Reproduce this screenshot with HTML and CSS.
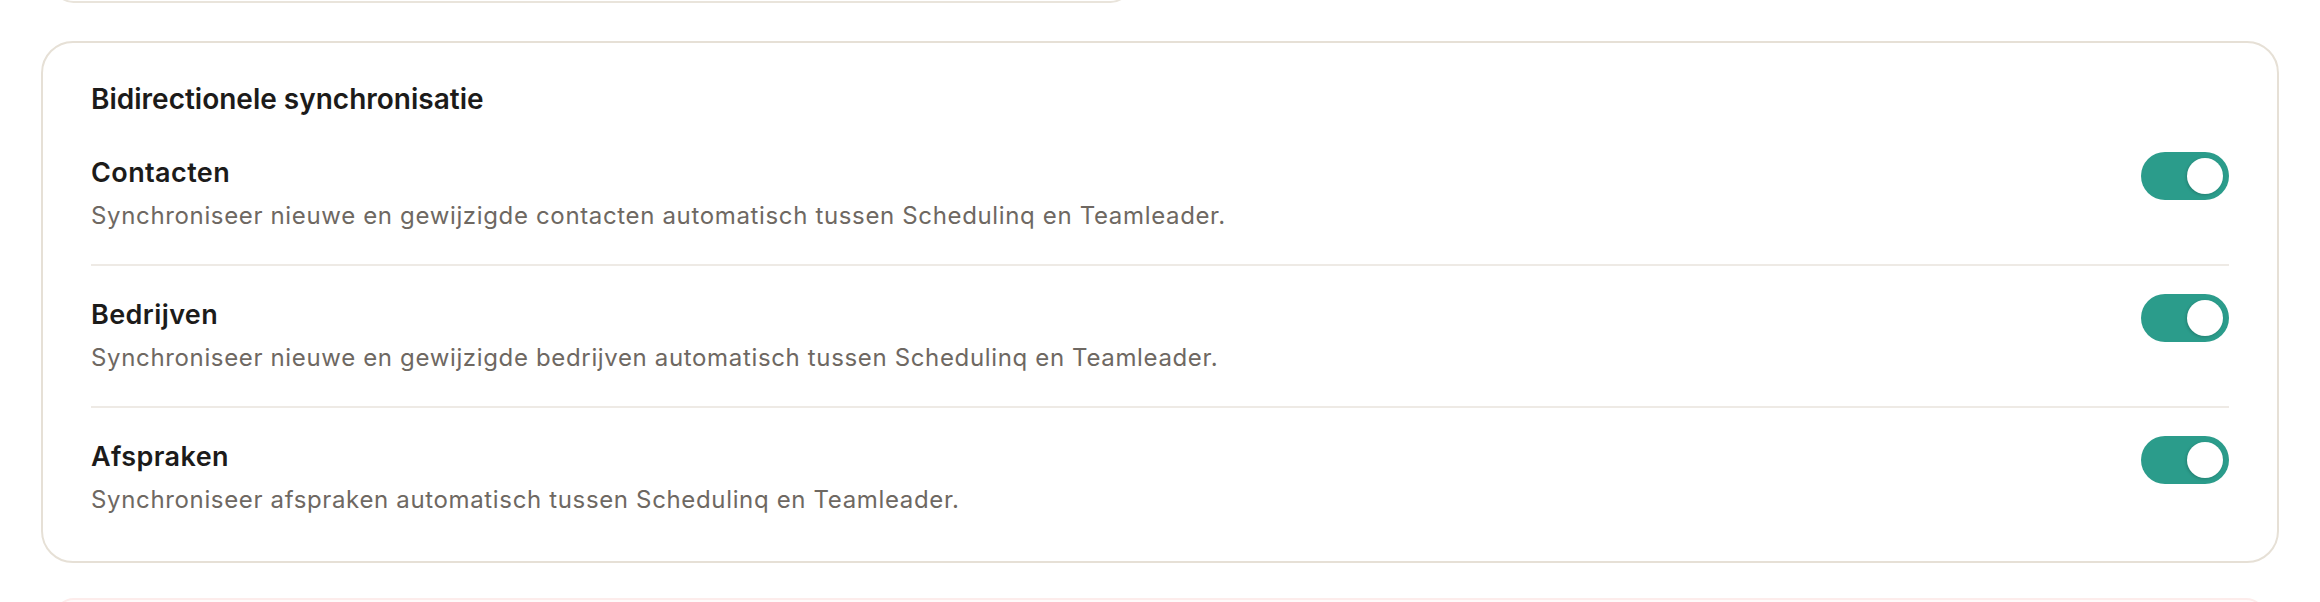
FILE: index.html
```html
<!DOCTYPE html>
<html lang="nl">
<head>
<meta charset="utf-8">
<title>Bidirectionele synchronisatie</title>
<link rel="stylesheet" href="styles.css">
</head>
<body>
<div class="page">
  <div class="prev-card"></div>
  <section class="card">
    <h2 class="card-title">Bidirectionele synchronisatie</h2>
    <div class="row">
      <div class="text">
        <div class="row-title">Contacten</div>
        <div class="row-desc">Synchroniseer nieuwe en gewijzigde contacten automatisch tussen Schedulinq en Teamleader.</div>
      </div>
      <button class="toggle on" aria-pressed="true"><span class="knob"></span></button>
    </div>
    <div class="row">
      <div class="text">
        <div class="row-title">Bedrijven</div>
        <div class="row-desc">Synchroniseer nieuwe en gewijzigde bedrijven automatisch tussen Schedulinq en Teamleader.</div>
      </div>
      <button class="toggle on" aria-pressed="true"><span class="knob"></span></button>
    </div>
    <div class="row">
      <div class="text">
        <div class="row-title">Afspraken</div>
        <div class="row-desc">Synchroniseer afspraken automatisch tussen Schedulinq en Teamleader.</div>
      </div>
      <button class="toggle on" aria-pressed="true"><span class="knob"></span></button>
    </div>
  </section>
  <div class="next-card"></div>
</div>
</body>
</html>
```
FILE: styles.css
```css
* { box-sizing: border-box; }
html, body { margin: 0; padding: 0; background: #ffffff; }
body {
  font-family: Inter, "Noto Sans", "Liberation Sans", sans-serif;
  color: #1c1b1a;
  overflow: hidden;
}
.page {
  padding: 0 41px;
  display: flex;
  flex-direction: column;
}
.prev-card {
  margin: -40px 1147px 0 11px;
  height: 43px;
  border: 2px solid #e9e4db;
  border-radius: 24px;
  background: #fff;
}
.card {
  margin-top: 38px;
  border: 2px solid #e6e0d6;
  border-radius: 32px;
  background: #fff;
  padding: 38px 48px 13px 48px;
}
.card-title {
  margin: 0 0 7px 0;
  font-size: 28px;
  line-height: 36px;
  font-weight: 600;
  color: #1c1b1a;
}
.row {
  display: flex;
  align-items: flex-start;
  justify-content: space-between;
  padding: 28px 0 31px 0;
  border-bottom: 2px solid #eeeae5;
}
.row:last-of-type { border-bottom: none; }
.text { padding-top: 4px; }
.row-title {
  font-size: 27px;
  line-height: 34px;
  font-weight: 600;
  letter-spacing: 0.4px;
  color: #1c1b1a;
  margin-bottom: 9px;
}
.row-desc {
  font-size: 24px;
  line-height: 34px;
  font-weight: 400;
  letter-spacing: 0.65px;
  color: #6e6862;
}
.toggle {
  position: relative;
  flex: none;
  width: 88px;
  height: 48px;
  border: none;
  padding: 0;
  border-radius: 24px;
  background: #2b9c8b;
  cursor: pointer;
}
.knob {
  position: absolute;
  top: 6px;
  left: 46px;
  width: 36px;
  height: 36px;
  border-radius: 50%;
  background: #ffffff;
  box-shadow: -1px 1px 3px rgba(0,0,0,0.18);
}
.next-card {
  margin: 35px 13px 0 13px;
  height: 40px;
  border: 2px solid #fdeceb;
  border-radius: 24px;
  background: #fffafa;
}
```
